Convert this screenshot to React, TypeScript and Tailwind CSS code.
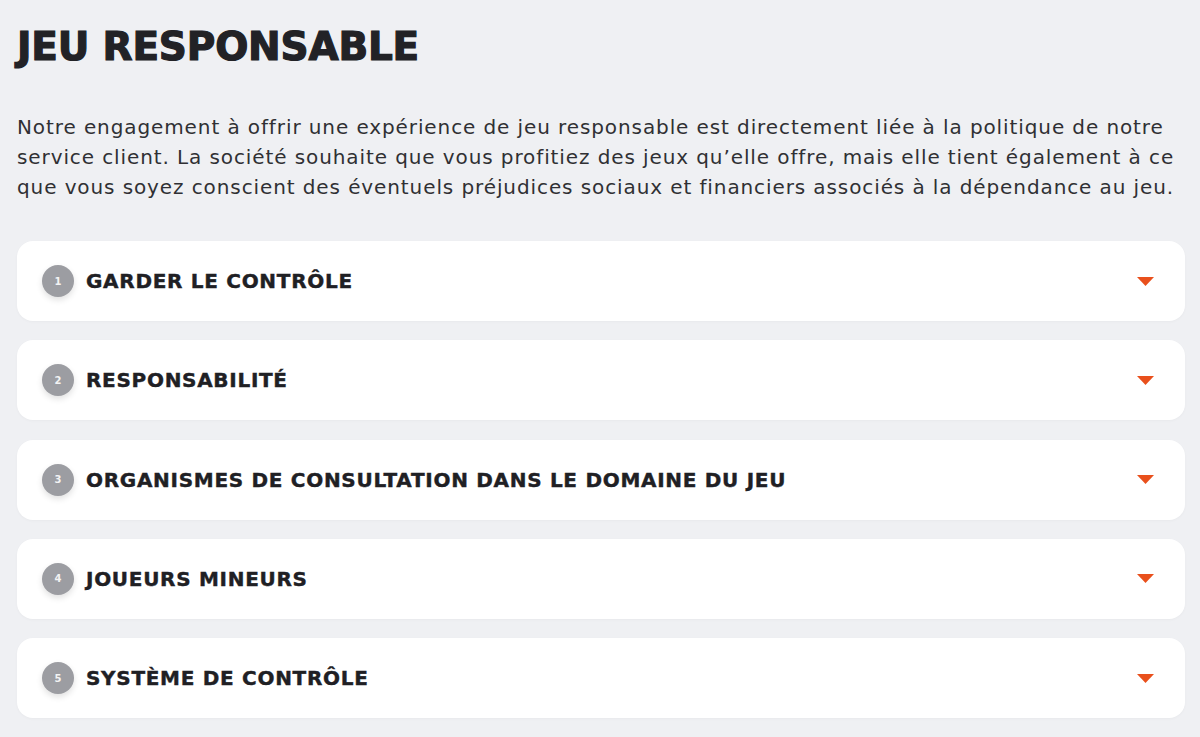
const items = [
  "GARDER LE CONTRÔLE",
  "RESPONSABILITÉ",
  "ORGANISMES DE CONSULTATION DANS LE DOMAINE DU JEU",
  "JOUEURS MINEURS",
  "SYSTÈME DE CONTRÔLE",
];

const App = () => {
  return (
    <div className="min-h-[737px] bg-[#eff0f3] px-[17px] pt-[24px] font-['DejaVu_Sans',sans-serif] text-[#2a2a2e]">
      <h1 className="text-[39px] font-black leading-[46px] tracking-[-0.2px] text-[#222226] [-webkit-text-stroke:1.2px_#222226]">
        JEU RESPONSABLE
      </h1>

      <p className="mt-[42px] text-[20px] leading-[30px] tracking-[0.9px] text-[#303034]">
        <span className="block">
          Notre engagement à offrir une expérience de jeu responsable est directement liée à la politique de notre
        </span>
        <span className="block">
          service client. La société souhaite que vous profitiez des jeux qu’elle offre, mais elle tient également à ce
        </span>
        <span className="block">
          que vous soyez conscient des éventuels préjudices sociaux et financiers associés à la dépendance au jeu.
        </span>
      </p>

      {/* Accordion */}
      <div className="mt-[39px] flex w-[1168px] flex-col gap-[19.3px]">
        {items.map((title, i) => (
          <div
            key={title}
            className="flex h-[80px] items-center rounded-[16px] bg-white pl-[25px] pr-[31px] shadow-[0_1px_3px_rgba(0,0,0,0.03)]"
          >
            <span className="flex h-[32px] w-[32px] shrink-0 items-center justify-center rounded-full bg-[#9c9da2] text-[10px] font-bold text-[#f3f3f3] shadow-[0_3px_6px_rgba(0,0,0,0.12)]">
              {i + 1}
            </span>
            <span className="ml-[12px] flex-1 text-[20px] font-bold tracking-[0.7px] text-[#202024] [-webkit-text-stroke:0.4px_#202024]">
              {title}
            </span>
            <svg width="17" height="9" viewBox="0 0 17 9">
              <path d="M0 0H17L8.5 9Z" fill="#e9501c" />
            </svg>
          </div>
        ))}
      </div>
    </div>
  );
};

export default App;
